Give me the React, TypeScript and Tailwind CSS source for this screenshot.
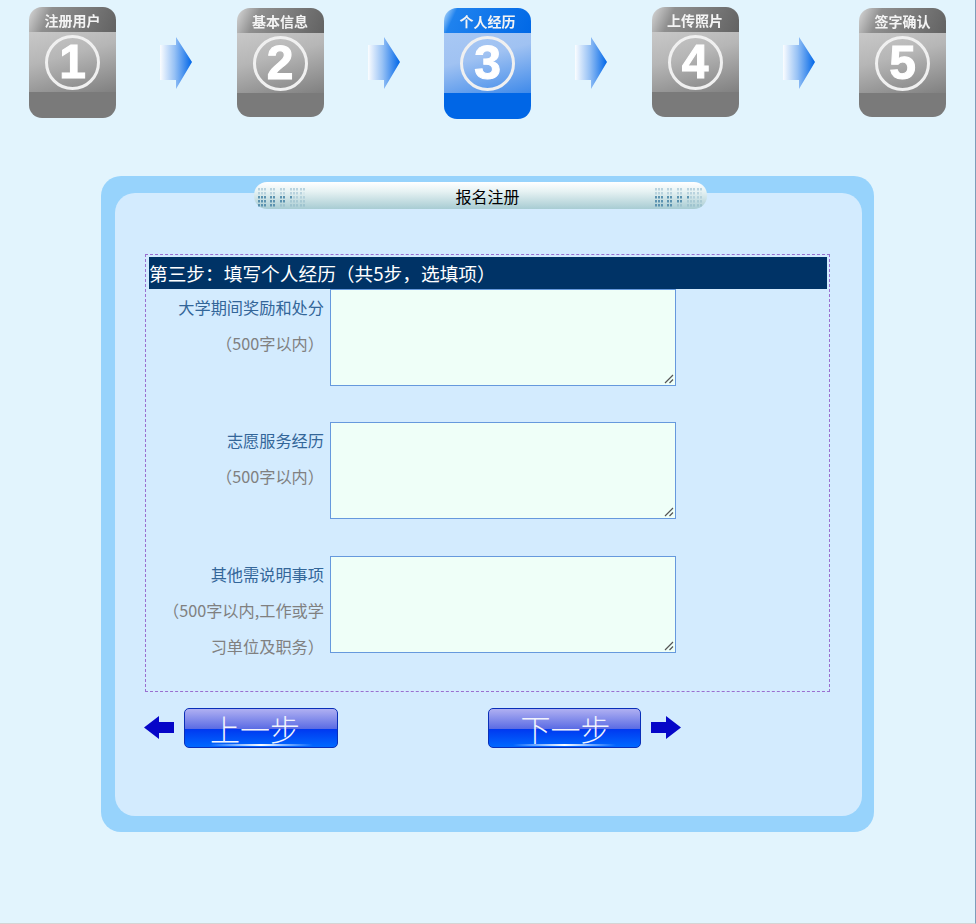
const steps = [
  { label: "注册用户", num: "1", top: 0, height: 111, active: false },
  { label: "基本信息", num: "2", top: 1, height: 109, active: false },
  { label: "个人经历", num: "3", top: 1, height: 111, active: true },
  { label: "上传照片", num: "4", top: 0, height: 110, active: false },
  { label: "签字确认", num: "5", top: 1, height: 109, active: false },
];

const fields = [
  { title: "大学期间奖励和处分", hint: ["（500字以内）"], gap: "mb-[36px]" },
  { title: "志愿服务经历", hint: ["（500字以内）"], gap: "mb-[37px]" },
  { title: "其他需说明事项", hint: ["（500字以内,工作或学", "习单位及职务）"], gap: "mb-0" },
];

const StepCard = ({ step }: { step: (typeof steps)[number] }) => (
  <div
    className="flex w-[87px] flex-col overflow-hidden rounded-[13px]"
    style={{ marginTop: step.top, height: step.height }}
  >
    <div
      className={`flex h-[25px] shrink-0 items-center justify-center ${
        step.active
          ? "bg-[linear-gradient(115deg,#c4e2fb_0%,#1f82ee_14%,#0068e6_100%)]"
          : "bg-[linear-gradient(115deg,#d8d8d8_0%,#8f8f8f_24%,#626262_100%)]"
      }`}
    >
      <span className="text-[14px] leading-none font-bold text-[#f4f4f4] blur-[0.4px]">
        {step.label}
      </span>
    </div>
    <div
      className={`flex h-[60px] shrink-0 items-center justify-center ${
        step.active
          ? "bg-[linear-gradient(165deg,#a8c8f4_0%,#a0c2f2_40%,#3f8aea_100%)]"
          : "bg-[linear-gradient(165deg,#c8c8c8_0%,#b6b6b6_40%,#808080_100%)]"
      }`}
    >
      <div className="flex size-[55px] items-center justify-center rounded-full border-[3px] border-[#f0f0f0] font-['Liberation_Sans',sans-serif] blur-[0.4px]">
        <span className="text-[48px] leading-none font-bold text-white [-webkit-text-stroke:1px_white]">
          {step.num}
        </span>
      </div>
    </div>
    <div className={`flex-1 ${step.active ? "bg-[#0066e6]" : "bg-[#7a7a7a]"}`} />
  </div>
);

const StepArrow = () => (
  <svg width="32" height="52" viewBox="0 0 32 52" className="mt-[30px] shrink-0">
    <defs>
      <linearGradient id="stepArrow" x1="0" x2="1" y1="0" y2="0">
        <stop offset="0" stopColor="#fbfdff" />
        <stop offset="0.45" stopColor="#98c2f5" />
        <stop offset="1" stopColor="#0066e8" />
      </linearGradient>
    </defs>
    <path d="M0 8H16V0L32 25L16 52V43H0Z" fill="url(#stepArrow)" />
  </svg>
);

const Dots = () => {
  const cols = [0, 3, 6, 12, 15, 22, 25, 32, 35, 38, 42, 45];
  return (
    <svg width="56" height="22" viewBox="0 0 56 22" className="shrink-0 blur-[0.4px]">
      {cols.map((x) =>
        [3, 7, 11, 15, 19].map((y) => (
          <rect
            key={`${x}-${y}`}
            x={x + 4}
            y={y}
            width="2"
            height="2.5"
            fill={y > 10 ? "#5c93b0" : "#b9d3de"}
            opacity={x + y * 2 > 56 ? 0.25 : 1}
          />
        )),
      )}
    </svg>
  );
};

const NavArrow = ({ left }: { left?: boolean }) => (
  <svg width="30" height="23" viewBox="0 0 30 23" className="mb-[2px] shrink-0">
    <path
      d={left ? "M0 11.5L15 0V6H30V17H15V23Z" : "M30 11.5L15 0V6H0V17H15V23Z"}
      fill="#0606c8"
    />
  </svg>
);

const NavButton = ({ text, width, inset }: { text: string; width: string; inset: string }) => (
  <button
    className={`relative flex h-[40px] ${width} ${inset} items-center justify-center rounded-[5px] border border-[#0a2fb8] bg-[linear-gradient(180deg,#b0b0f2_0%,#5b6ce4_52%,#0038f0_53%,#0068ff_100%)] text-[30px] leading-none font-light text-[#f2f3fc]`}
  >
    {text}
    <span className="absolute right-[24px] bottom-[1px] left-[24px] h-[2px] bg-[linear-gradient(90deg,transparent,#ffffff,transparent)]" />
  </button>
);

export default function App() {
  return (
    <div className="h-[924px] w-[976px] overflow-hidden border-r border-b border-r-[#7f9db9] border-b-[#d4d4d4] bg-[#e2f4fd] pt-[7px] font-['Noto_Sans_CJK_SC','Noto_Sans',sans-serif]">
      {/* STEPS */}
      <div className="ml-[29px] flex h-[112px] w-[917px] items-start justify-between">
        {steps.map((step, i) => (
          <div key={step.num} className="contents">
            <StepCard step={step} />
            {i < steps.length - 1 && <StepArrow />}
          </div>
        ))}
      </div>

      {/* PANEL */}
      <div className="mt-[57px] ml-[101px] h-[656px] w-[773px] rounded-[20px] bg-[#97d3fc] pt-[6px]">
        <div className="relative z-10 mb-[-16px] ml-[153px] flex h-[27px] w-[453px] items-center justify-between rounded-[13px] bg-[linear-gradient(180deg,#ffffff_0%,#e6f2f3_35%,#a8ccd3_100%)]">
          <Dots />
          <span className="ml-[14px] text-[16px] leading-none text-black">报名注册</span>
          <Dots />
        </div>

        <div className="ml-[14px] h-[623px] w-[747px] rounded-[20px] bg-[#d3ebfe] pt-[61px] pl-[30px]">
          {/* FORM */}
          <div className="h-[438px] w-[685px] border border-dashed border-[#9a6fd0] pt-[2px] pl-[3px]">
            <div className="flex h-[32px] w-[678px] items-center bg-[#003366] text-[18.7px] leading-none whitespace-nowrap text-white">
              第三步：填写个人经历（共5步，选填项）
            </div>

            {fields.map((field) => (
              <div key={field.title} className={`flex items-start ${field.gap}`}>
                <div className="w-[181px] pr-[6px] text-right text-[16.2px] leading-[36px] whitespace-nowrap">
                  <div className="text-[#336699]">{field.title}</div>
                  {field.hint.map((line) => (
                    <div key={line} className="text-[#808080]">
                      {line}
                    </div>
                  ))}
                </div>
                <div className="relative h-[97px] w-[346px]">
                  <textarea className="block h-full w-full resize-none border border-[#6699dd] bg-[#efffF8] outline-none" />
                  <svg width="10" height="10" viewBox="0 0 10 10" className="absolute right-[2px] bottom-[2px]">
                    <path d="M1 9L9 1M5.5 9L9 5.5" stroke="#555555" strokeWidth="1.2" />
                  </svg>
                </div>
              </div>
            ))}
          </div>

          {/* NAV */}
          <div className="mt-[16px] ml-[-1px] flex items-center">
            <NavArrow left />
            <div className="ml-[10px]">
              <NavButton text="上一步" width="w-[154px]" inset="pr-[12px]" />
            </div>
            <div className="ml-[150px]">
              <NavButton text="下一步" width="w-[153px]" inset="pl-[2px]" />
            </div>
            <div className="ml-[10px]">
              <NavArrow />
            </div>
          </div>
        </div>
      </div>
    </div>
  );
}
